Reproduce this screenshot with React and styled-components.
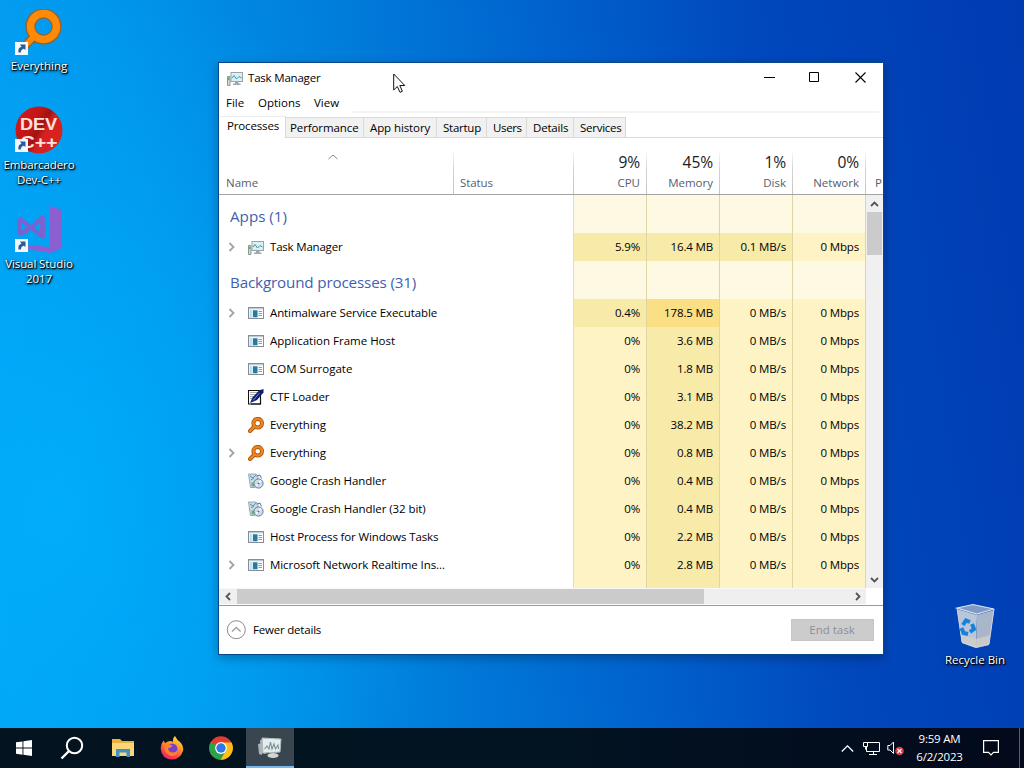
import React from "react";
import styled, { createGlobalStyle } from "styled-components";

const Global = createGlobalStyle`
  * { box-sizing: border-box; }
  body { margin: 0; overflow: hidden; }
  body, button { font-family: "Open Sans", "Noto Sans", sans-serif; font-size: 11.5px; }
  svg { display: block; flex: none; }
`;

const Desktop = styled.div`
  position: relative;
  width: 1024px;
  height: 768px;
  display: flex;
  flex-direction: column;
  justify-content: flex-end;
  background:
    radial-gradient(ellipse 380px 560px at 6% 66%, rgba(0, 180, 255, 0.7), rgba(0, 170, 255, 0) 100%),
    linear-gradient(82deg, #04a0f4 0%, #0094ea 20%, #007fdc 38%, #0062cd 58%, #0048bc 76%, #003bb2 100%);
`;

const Shortcut = styled.div`
  position: absolute;
  left: ${(p) => p.$x}px;
  top: ${(p) => p.$y}px;
  width: 78px;
  display: flex;
  flex-direction: column;
  align-items: center;
  gap: ${(p) => p.$gap ?? 2}px;
  color: #fff;
  line-height: 15px;
  text-align: center;
  white-space: pre;
  letter-spacing: ${(p) => p.$ls || 0}px;
  text-shadow: 1px 1px 1px #000, 0 1px 3px rgba(0, 0, 0, 0.9), 1px 1px 2px rgba(0, 0, 0, 0.7);
`;

const Window = styled.div`
  position: absolute;
  left: 218px;
  top: 62px;
  width: 666px;
  height: 593px;
  border: 1px solid #08478c;
  background: #fff;
  box-shadow: 0 3px 10px rgba(0, 0, 0, 0.28);
  display: flex;
  flex-direction: column;
  color: #000;
`;

const TitleBar = styled.div`
  height: 30px;
  display: flex;
  align-items: center;
  padding-left: 8px;
  gap: 5px;
`;
const Caption = styled.span`
  flex: 1;
  padding-bottom: 2px;
  letter-spacing: ${(p) => p.$ls || 0}px;
`;
const WinButtons = styled.div`
  display: flex;
  padding-bottom: 2px;
`;
const WinButton = styled.span`
  width: 45.5px;
  height: 28px;
  display: flex;
  align-items: center;
  justify-content: center;
`;

const MenuBar = styled.div`
  height: 18px;
  display: flex;
  align-items: center;
  padding-left: 7px;
  line-height: 18px;
`;
const MenuItem = styled.span`
  width: ${(p) => p.$w}px;
  letter-spacing: ${(p) => p.$ls || 0}px;
  padding-top: 2px;
`;
const Rule = styled.div`
  height: 2px;
  margin: 0 4px 0 134px;
  background: #f3f3f3;
`;

const Tabs = styled.div`
  height: 25px;
  display: flex;
  align-items: flex-end;
  border-bottom: 1px solid #dadada;
`;
const Tab = styled.div`
  width: ${(p) => p.$w}px;
  height: ${(p) => (p.$active ? 22 : 20)}px;
  margin-bottom: ${(p) => (p.$active ? -1 : 0)}px;
  line-height: ${(p) => (p.$active ? 18 : 19)}px;
  padding-left: ${(p) => p.$pad}px;
  white-space: nowrap;
  letter-spacing: ${(p) => p.$ls || 0}px;
  background: ${(p) => (p.$active ? "#fff" : "#f1f1f1")};
  border-top: 1px solid ${(p) => (p.$active ? "#ececec" : "#dcdcdc")};
  border-right: 1px solid #d9d9d9;
`;

const Header = styled.div`
  height: 57px;
  display: flex;
  border-bottom: 1px solid #a3a3a3;
  color: #56606c;
`;
const HeadCell = styled.div`
  width: ${(p) => p.$w}px;
  flex: none;
  overflow: hidden;
  display: flex;
  flex-direction: column;
  justify-content: flex-end;
  align-items: ${(p) => (p.$right ? "flex-end" : "stretch")};
  padding: 0 ${(p) => (p.$right ? 6 : 0)}px 3px ${(p) => (p.$right ? 0 : p.$pad || 7)}px;
  line-height: 16px;
  white-space: nowrap;
  border-right: 1px solid;
  border-image: linear-gradient(#fff 20%, #d4d4d4 55%, #c4c4c4) 1;
  letter-spacing: ${(p) => p.$ls || 0}px;
  &:last-child { border-right: 0; }
`;
const SortMark = styled.span`
  display: flex;
  justify-content: center;
  padding-right: 14px;
  height: 21px;
`;
const Total = styled.span`
  font-size: 15.6px;
  line-height: 22px;
  padding-bottom: 2px;
  color: #1c1c1c;
  letter-spacing: -0.1px;
`;

const Body = styled.div`
  height: 393px;
  display: flex;
`;
const Rows = styled.div`
  width: 647px;
  height: 393px;
  overflow: hidden;
`;
const Row = styled.div`
  height: ${(p) => p.$h || 28}px;
  display: flex;
`;
const NameCell = styled.div`
  width: 355px;
  border-right: 1px solid #e3dfbc;
  display: flex;
  align-items: center;
  padding-left: 9px;
`;
const Label = styled.span`
  padding-bottom: 2px;
  white-space: nowrap;
  letter-spacing: ${(p) => p.$ls || 0}px;
`;
const GroupName = styled.span`
  font-size: 15.2px;
  color: #3f5fb0;
  padding: 3px 0 0 2px;
  letter-spacing: ${(p) => p.$ls || 0}px;
`;
const Arrow = styled.span`
  width: 20px;
`;
const IconSlot = styled.span`
  width: 22px;
`;
const Cell = styled.div`
  width: 73px;
  padding-right: 6px;
  line-height: 27px;
  text-align: right;
  white-space: nowrap;
  background: ${(p) => p.$heat};
  border-right: 1px solid #dfd6a3;
  letter-spacing: -0.15px;
`;

const VScroll = styled.div`
  width: 17px;
  display: flex;
  flex-direction: column;
  align-items: center;
  justify-content: space-between;
  background: #f0f0f0;
`;
const VThumb = styled.div`
  width: 15px;
  height: 43px;
  background: #cbcbcb;
`;
const ScrollEnd = styled.span`
  width: 17px;
  height: ${(p) => p.$h || 17}px;
  display: flex;
  align-items: center;
  justify-content: center;
`;
const VTop = styled.div`
  display: flex;
  flex-direction: column;
  align-items: center;
`;
const HScroll = styled.div`
  width: 647px;
  height: 17px;
  display: flex;
  background: #efefef;
  border-top: 1px solid #f8f8f8;
  border-bottom: 1px solid #fff;
`;
const HThumb = styled.div`
  width: 467px;
  margin: 0 auto 0 1px;
  background: #cbcbcb;
`;

const Footer = styled.div`
  flex: 1;
  border-top: 1px solid #999;
  display: flex;
  align-items: center;
  padding: 0 9px 0 7px;
  gap: 7px;
`;
const EndTask = styled.button`
  width: 83px;
  height: 22px;
  margin-bottom: 1px;
  padding: 0 1px 1px 0;
  border: 1px solid #c6c6c6;
  background: #cccccc;
  color: #8c8f9a;
`;

const Pointer = styled.div`
  position: absolute;
  left: 393px;
  top: 73px;
`;

const Taskbar = styled.div`
  height: 40px;
  display: flex;
  background: linear-gradient(90deg, #03131f, #021322 55%, #020a1c 100%);
  color: #fff;
`;
const AppButton = styled.div`
  width: ${(p) => p.$w}px;
  display: flex;
  align-items: center;
  justify-content: center;
  padding-top: 2px;
  background: ${(p) => (p.$active ? "#394650" : "transparent")};
  border-bottom: 2px solid ${(p) => (p.$active ? "#76b9ed" : "transparent")};
`;
const Tray = styled.div`
  margin-left: auto;
  display: flex;
  align-items: center;
`;
const TrayIcon = styled.span`
  width: ${(p) => p.$w}px;
`;
const Clock = styled.div`
  width: 61px;
  text-align: center;
  line-height: 18px;
  letter-spacing: -0.2px;
  padding-bottom: 1px;
`;
const ShowDesktop = styled.div`
  width: 5px;
  height: 40px;
  border-left: 1px solid #59616b;
`;

const LinkBadge = () => (
  <g>
    <rect x="0" y="33" width="13" height="13" fill="#f4f7fb" />
    <path d="M3.5 43.5Q2.7 38.5 6.5 37.7L5 35.5H10.5V41L8.8 39.7Q6 40.2 5.8 43.5Z" fill="#2b5a9c" />
  </g>
);

const EverythingBig = () => (
  <svg width="48" height="48" viewBox="0 0 48 48">
    <path d="M18.5 28 7 40" stroke="#94602c" strokeWidth="8.5" />
    <circle cx="28.500" cy="17.500" r="13" fill="none" stroke="#94602c" strokeWidth="10" />
    <path d="M19 27.500 7 40" stroke="#ff8a08" strokeWidth="6" />
    <circle cx="28.500" cy="17.500" r="13" fill="none" stroke="#ff8a08" strokeWidth="7.500" />
    <LinkBadge />
  </svg>
);

const DevBig = () => (
  <svg width="48" height="48" viewBox="0 0 48 48">
    <defs>
      <linearGradient id="dev" x1="0" y1=".2" x2="1" y2=".8">
        <stop offset="0" stopColor="#d01818" />
        <stop offset=".35" stopColor="#c41616" />
        <stop offset=".5" stopColor="#a01212" />
        <stop offset=".62" stopColor="#d62020" />
        <stop offset="1" stopColor="#d8241e" />
      </linearGradient>
    </defs>
    <circle cx="24" cy="24" r="23.5" fill="url(#dev)" />
    <g fill="#fbe2dc" fontFamily="Liberation Sans, sans-serif" fontWeight="700" fontSize="16" style={{ textShadow: "none" }}>
      <text x="5" y="24" textLength="37" lengthAdjust="spacingAndGlyphs">DEV</text>
      <text x="5.5" y="42" textLength="37" lengthAdjust="spacingAndGlyphs">C++</text>
    </g>
    <LinkBadge />
  </svg>
);

const StudioBig = () => (
  <svg width="48" height="48" viewBox="0 0 48 48">
    <path d="M35 0 47 4V42L35 47 12 43V39L35 41Z" fill="#8b5fd0" />
    <path d="M2 13 6 11 16 19 27 9 30 11V31L27 33 16 24 7 30 2 28ZM6.5 17V25L12 21ZM25 17 19 21 25 26Z" fill="#7a62cf" fillRule="evenodd" />
    <LinkBadge />
  </svg>
);

const RecycleBin = () => (
  <svg width="48" height="48" viewBox="0 0 48 48">
    <path d="M6 7 26 13 25 46 11 41Z" fill="#b9c5d8" />
    <path d="M26 13 43 8 38 43 25 46Z" fill="#a9b5c8" />
    <path d="M10 33 25 37 39 33 38 43 25 46 11 41Z" fill="#d2cdc8" opacity=".8" />
    <path d="M6 6 22 2.500 43 7 26 12Z" fill="#7f98c4" stroke="#dbe4ee" strokeWidth="1.2" />
    <path d="M6 6 11 40 25 45 38 42 43 7" fill="none" stroke="#cbd4e0" strokeWidth="1" />
    <g fill="none" stroke="#1682dc" strokeWidth="4">
      <path d="M12 23 15 18.500 19 20" />
      <path d="M21 22 23 27 19 30" />
      <path d="M10.500 26 12.500 31 17 32" />
    </g>
  </svg>
);

const TaskMgr = () => (
  <svg width="16" height="16" viewBox="0 0 16 16">
    <path d="M.5 15.5V6.5H3V15.5Z" fill="#d6dcd4" stroke="#8b9a92" />
    <path d="M1 7.5H2.5V10H1Z" fill="#67ae5a" />
    <rect x="4" y="2.5" width="11.5" height="9" fill="#d9f1f6" stroke="#9aa4a8" />
    <path d="M5 8 7 5.5 9.5 9 12 6.5 14.5 8" fill="none" stroke="#3a93b0" />
    <path d="M8 12H11.5V13.5H13.5V15H6V13.5H8Z" fill="#a2a9ac" />
  </svg>
);
const ProcessIcon = () => (
  <svg width="16" height="16" viewBox="0 0 16 16">
    <rect x=".5" y="2.5" width="15" height="11" fill="#fff" stroke="#858e94" />
    <rect x="1" y="3" width="14" height="1.3" fill="#c4cacd" />
    <rect x="1.5" y="5" width="3" height="8" fill="#bfe3ef" />
    <rect x="5" y="5.3" width="4.5" height="7" fill="#2479a5" />
    <path d="M10.5 6.5H14M10.5 8.5H14M10.5 10.5H14" stroke="#8d9ba3" />
  </svg>
);
const CtfIcon = () => (
  <svg width="16" height="16" viewBox="0 0 16 16">
    <rect x=".5" y="1.5" width="12" height="13.5" fill="#fff" stroke="#111" />
    <path d="M2.5 3.5H10M2.5 5.5H9M2.5 7.5H7M2.5 9.5H5" stroke="#555" strokeDasharray="1 1" />
    <path d="M2 14 4.500 8.500 11 1.500 15.500 0 15.500 3.500 9 11Z" fill="#101c70" />
    <path d="M5 11.5 11.5 4" stroke="#6d8ad6" />
    <path d="M3 15H12.5V8" fill="none" stroke="#111" strokeWidth="1.2" />
  </svg>
);
const EverythingIcon = () => (
  <svg width="16" height="16" viewBox="0 0 16 16">
    <path d="M6.5 9.5 2 14" stroke="#a9560c" strokeWidth="4" strokeLinecap="round" />
    <circle cx="9.700" cy="6.200" r="4.300" fill="none" stroke="#a9560c" strokeWidth="4" />
    <path d="M6.5 9.5 2.1 13.9" stroke="#f08420" strokeWidth="2.4" strokeLinecap="round" />
    <circle cx="9.700" cy="6.200" r="4.300" fill="none" stroke="#f08420" strokeWidth="2.400" />
  </svg>
);
const CrashIcon = () => (
  <svg width="16" height="16" viewBox="0 0 16 16">
    <path d="M.5 1H8L10 3V9L7 14.5H2.5Z" fill="#c9dbe3" stroke="#839aaa" strokeWidth=".8" />
    <path d="M2 3 5 5 8 2M3 7 6 5" stroke="#5a90a8" fill="none" />
    <path d="M3.5 9.5H6V13.5H3.5Z" fill="#6cb466" />
    <circle cx="10.5" cy="10.5" r="4.6" fill="#cddcee" stroke="#647a9c" />
    <path d="M10.5 10.5 12.7 7.5M10.5 10.5 8.2 12.5" stroke="#fff" strokeWidth="1.6" />
    <circle cx="10.5" cy="10.5" r="1.1" fill="#5a749c" />
    <path d="M8.5 3 12 2 13.5 5.5" fill="none" stroke="#5078b4" />
  </svg>
);

const Chevron = ({ d, w = 8, h = 8, color = "#555", sw = 1.8 }) => (
  <svg width={w} height={h} viewBox={`0 0 ${w} ${h}`}>
    <path d={d} fill="none" stroke={color} strokeWidth={sw} />
  </svg>
);

const WindowsLogo = () => (
  <svg width="16" height="16" viewBox="0 0 16 16" fill="#fff">
    <path d="M0 2.3 6.5 1.4V7.6H0ZM7.4 1.3 16 0V7.6H7.4ZM0 8.5H6.5V14.7L0 13.8ZM7.4 8.5H16V16L7.4 14.8Z" />
  </svg>
);
const SearchIcon = () => (
  <svg width="24" height="24" viewBox="0 0 24 24" fill="none" stroke="#fff" strokeWidth="2">
    <circle cx="14.5" cy="9.5" r="7.7" />
    <path d="M9 15 1.5 22.5" strokeWidth="2.4" />
  </svg>
);
const FolderIcon = () => (
  <svg width="22" height="20" viewBox="0 0 22 20">
    <path d="M0 1H8L10 3H22V18H0Z" fill="#e9b23c" />
    <path d="M0 5H22V18H0Z" fill="#f9d676" />
    <path d="M4 11H18V19H14.5V14.5H7.5V19H4Z" fill="#4291c4" />
  </svg>
);
const FirefoxIcon = () => (
  <svg width="24" height="24" viewBox="0 0 24 24">
    <defs>
      <linearGradient id="ff" x1=".8" y1="0" x2=".3" y2="1">
        <stop offset="0" stopColor="#ffe33f" />
        <stop offset=".4" stopColor="#ff9a2a" />
        <stop offset=".75" stopColor="#ff4548" />
        <stop offset="1" stopColor="#e8207c" />
      </linearGradient>
    </defs>
    <path d="M15 0Q17 4 20 6Q24 10 23 15Q20 23.5 12 23.5Q1.5 23 .7 12.5Q.7 8 3.5 4.5L5 7 8 5.5Q11 4.5 13 6Q12.5 2 15 0Z" fill="url(#ff)" />
    <circle cx="12" cy="13" r="5.5" fill="#7542c8" />
    <path d="M4 8Q8 7 12.5 9.5L11 11.5 8 12Q8.5 16 12 16.5 16 17 17.5 13.5 18.5 19 12 20 4 19 4 8Z" fill="#ff8128" />
  </svg>
);
const ChromeIcon = () => (
  <svg width="24" height="24" viewBox="0 0 24 24">
    <circle cx="12" cy="12" r="11.8" fill="#e33b2e" />
    <path d="M12 12 1.8 6A11.8 11.8 0 0 0 11.5 23.8L17 15Z" fill="#2ba24c" />
    <path d="M12 6.5H22.5A11.8 11.8 0 0 1 11.5 23.8L17 14.5Z" fill="#fbc116" />
    <circle cx="12" cy="12" r="5.9" fill="#fff" />
    <circle cx="12" cy="12" r="4.7" fill="#2f78e6" />
  </svg>
);
const TaskMgrLarge = () => (
  <svg width="24" height="24" viewBox="0 0 24 24">
    <path d="M0 8 4 7V19L1 18ZM2 4 8 3V18L3 17Z" fill="#adb4b6" />
    <path d="M4 2 23 3 22 16 5 17Z" fill="#e6ebeb" stroke="#b2babc" />
    <path d="M6.5 13 9 10 11 13 12.5 6 14 13 16 8 17.5 13 20 9 20.5 13" fill="none" stroke="#76939e" strokeWidth="1.1" />
    <ellipse cx="15" cy="19.5" rx="5.5" ry="2.5" fill="#d1d5d5" />
  </svg>
);

const NORMAL = "#fdf3c4";
const WARM = "#f8eaa8";
const HOT = "#fbdf84";
const GROUP = "#fef9e3";

const processes = [
  { name: "Antimalware Service Executable", icon: ProcessIcon, open: true, cpu: "0.4%", mem: "178.5 MB", cpuHeat: WARM, memHeat: HOT, ls: -0.1 },
  { name: "Application Frame Host", icon: ProcessIcon, mem: "3.6 MB" },
  { name: "COM Surrogate", icon: ProcessIcon, mem: "1.8 MB" },
  { name: "CTF Loader", icon: CtfIcon, mem: "3.1 MB", ls: -0.05 },
  { name: "Everything", icon: EverythingIcon, mem: "38.2 MB", ls: -0.05 },
  { name: "Everything", icon: EverythingIcon, open: true, mem: "0.8 MB", ls: -0.05 },
  { name: "Google Crash Handler", icon: CrashIcon, mem: "0.4 MB", ls: -0.08 },
  { name: "Google Crash Handler (32 bit)", icon: CrashIcon, mem: "0.4 MB", ls: -0.07 },
  { name: "Host Process for Windows Tasks", icon: ProcessIcon, mem: "2.2 MB", ls: -0.14 },
  { name: "Microsoft Network Realtime Ins...", icon: ProcessIcon, open: true, mem: "2.8 MB", ls: -0.07 },
];

const ProcessRow = ({ name, icon: Icon, open, cpu = "0%", mem, disk = "0 MB/s", net = "0 Mbps", cpuHeat = NORMAL, memHeat = WARM, diskHeat = NORMAL, ls = 0 }) => (
  <Row>
    <NameCell>
      <Arrow>{open && <Chevron d="M1.5 1 5.5 5 1.5 9" h={10} color="#a3a3a3" />}</Arrow>
      <IconSlot><Icon /></IconSlot>
      <Label $ls={ls}>{name}</Label>
    </NameCell>
    <Cell $heat={cpuHeat}>{cpu}</Cell>
    <Cell $heat={memHeat}>{mem}</Cell>
    <Cell $heat={diskHeat}>{disk}</Cell>
    <Cell $heat={NORMAL}>{net}</Cell>
  </Row>
);

const GroupRow = ({ children, ls }) => (
  <Row $h={38}>
    <NameCell><GroupName $ls={ls}>{children}</GroupName></NameCell>
    {[0, 1, 2, 3].map((i) => <Cell key={i} $heat={GROUP} />)}
  </Row>
);

const tabs = [
  ["Processes", 67, 8, -0.15],
  ["Performance", 78, 4, -0.1],
  ["App history", 73, 6, -0.1],
  ["Startup", 50, 6, -0.25],
  ["Users", 40, 6, -0.35],
  ["Details", 47, 6, -0.2],
  ["Services", 52, 6, -0.25],
];

export default function App() {
  return (
    <Desktop>
      <Global />
      <Shortcut $x={0} $y={9} $gap={1}><EverythingBig />Everything</Shortcut>
      <Shortcut $x={0} $y={106} $gap={3} $ls={-0.1}><DevBig />{"Embarcadero\nDev-C++"}</Shortcut>
      <Shortcut $x={0} $y={206} $gap={2} $ls={-0.1}><StudioBig />{"Visual Studio\n2017"}</Shortcut>
      <Shortcut $x={936} $y={602}><RecycleBin />Recycle Bin</Shortcut>

      <Window>
        <TitleBar>
          <TaskMgr />
          <Caption $ls={-0.2}>Task Manager</Caption>
          <WinButtons>
            <WinButton><Chevron d="M0 5.5H11" w={11} h={11} color="#000" sw={1} /></WinButton>
            <WinButton><Chevron d="M.5 .5H9.5V9.5H.5Z" w={11} h={10} color="#000" sw={1} /></WinButton>
            <WinButton><Chevron d="M.5 .5 10.5 10.5M10.5 .5 .5 10.5" w={11} h={11} color="#000" sw={1.1} /></WinButton>
          </WinButtons>
        </TitleBar>
        <MenuBar>
          <MenuItem $w={32}>File</MenuItem>
          <MenuItem $w={56}>Options</MenuItem>
          <MenuItem $w={40}>View</MenuItem>
        </MenuBar>
        <Rule />
        <Tabs>
          {tabs.map(([label, w, pad, ls], i) => <Tab key={label} $w={w} $pad={pad} $ls={ls} $active={i === 0}>{label}</Tab>)}
        </Tabs>
        <Header>
          <HeadCell $w={235}>
            <SortMark><Chevron d="M.5 5 5 1 9.5 5" w={10} h={6} color="#888" sw={1} /></SortMark>
            Name
          </HeadCell>
          <HeadCell $w={120} $pad={6} $ls={-0.1}>Status</HeadCell>
          <HeadCell $w={73} $right><Total>9%</Total>CPU</HeadCell>
          <HeadCell $w={73} $right><Total>45%</Total>Memory</HeadCell>
          <HeadCell $w={73} $right><Total>1%</Total>Disk</HeadCell>
          <HeadCell $w={73} $right><Total>0%</Total>Network</HeadCell>
          <HeadCell $w={17} $pad={9}>P</HeadCell>
        </Header>
        <Body>
          <Rows>
            <GroupRow>Apps (1)</GroupRow>
            <ProcessRow name="Task Manager" icon={TaskMgr} open cpu="5.9%" mem="16.4 MB" disk="0.1 MB/s" cpuHeat={WARM} diskHeat={WARM} ls={-0.2} />
            <GroupRow ls={-0.15}>Background processes (31)</GroupRow>
            {processes.map((p, i) => <ProcessRow key={i} {...p} />)}
            <Row>
              <NameCell />
              <Cell $heat={NORMAL} /><Cell $heat={WARM} /><Cell $heat={NORMAL} /><Cell $heat={NORMAL} />
            </Row>
          </Rows>
          <VScroll>
            <VTop>
              <ScrollEnd><Chevron d="M1 6 4.5 2.5 8 6" w={9} /></ScrollEnd>
              <VThumb />
            </VTop>
            <ScrollEnd><Chevron d="M1 2 4.5 5.5 8 2" w={9} /></ScrollEnd>
          </VScroll>
        </Body>
        <HScroll>
          <ScrollEnd $h={15}><Chevron d="M6 1 2.5 4.5 6 8" h={9} /></ScrollEnd>
          <HThumb />
          <ScrollEnd $h={15}><Chevron d="M2 1 5.5 4.5 2 8" h={9} /></ScrollEnd>
        </HScroll>
        <Footer>
          <svg width="20" height="20" viewBox="0 0 20 20" fill="none" stroke="#8b8b8b">
            <circle cx="10.3" cy="9.7" r="9" />
            <path d="M6 11.5 10.3 7.5 14.6 11.5" stroke="#a0a0a0" strokeWidth="1.5" />
          </svg>
          <Caption $ls={-0.2}>Fewer details</Caption>
          <EndTask disabled>End task</EndTask>
        </Footer>
      </Window>

      <Pointer>
        <svg width="13" height="20" viewBox="0 0 13 20">
          <path d="M.7 1V17L4.3 13.5 7 19.3 9.4 18.3 6.8 12.5H11.8Z" fill="#fff" stroke="#111" />
        </svg>
      </Pointer>

      <Taskbar>
        <AppButton $w={48}><WindowsLogo /></AppButton>
        <AppButton $w={48}><SearchIcon /></AppButton>
        <AppButton $w={53}><FolderIcon /></AppButton>
        <AppButton $w={46}><FirefoxIcon /></AppButton>
        <AppButton $w={51}><ChromeIcon /></AppButton>
        <AppButton $w={48} $active><TaskMgrLarge /></AppButton>
        <Tray>
          <TrayIcon $w={22}><Chevron d="M.8 7.5 6.5 1.8 12.2 7.5" w={13} h={9} color="#fff" sw={1.3} /></TrayIcon>
          <TrayIcon $w={24}>
            <svg width="17" height="16" viewBox="0 0 17 16" fill="none" stroke="#fff">
              <path d="M4.5 2.5H16.5V11.5H3.5V6.5M10.5 11.5V14.5M6 14.5H14" />
              <path d="M.5 2.5H4.5V6.5H.5ZM2.5 6.5V9.5" />
            </svg>
          </TrayIcon>
          <TrayIcon $w={22}>
            <svg width="18" height="16" viewBox="0 0 18 16">
              <path d="M.8 5.5H3L6.5 2V13.5L3 10H.8Z" fill="none" stroke="#fff" />
              <circle cx="12.5" cy="11" r="4.3" fill="#d83b43" />
              <path d="M10.5 9 14.5 13M14.5 9 10.5 13" stroke="#fff" strokeWidth="1.2" />
            </svg>
          </TrayIcon>
          <Clock>9:59 AM<br />6/2/2023</Clock>
          <TrayIcon $w={49}>
            <svg width="48" height="20" viewBox="0 0 48 20" fill="none" stroke="#fff" strokeWidth="1.2">
              <path d="M13.6 2.6H28.4V14.4H23.5L21 17 18.5 14.4H13.6Z" />
            </svg>
          </TrayIcon>
          <ShowDesktop />
        </Tray>
      </Taskbar>
    </Desktop>
  );
}
